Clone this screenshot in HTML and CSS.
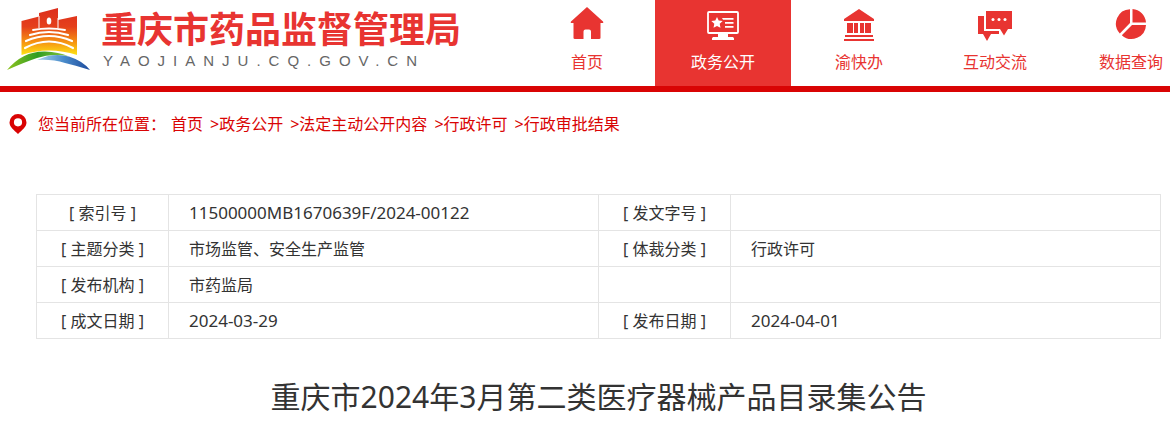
FILE: index.html
```html
<!DOCTYPE html>
<html lang="zh-CN">
<head>
<meta charset="utf-8">
<meta name="viewport" content="width=device-width, initial-scale=1">
<title>重庆市药品监督管理局</title>
<link rel="stylesheet" href="styles.css">
</head>
<body>
<header class="header">
  <a class="brand" href="#">
    <svg class="brand-mark" viewBox="0 0 84 64" aria-hidden="true">
      <defs>
        <linearGradient id="tower" x1="0" y1="0" x2="0" y2="1">
          <stop offset="0" stop-color="#dc2d1c"/>
          <stop offset=".4" stop-color="#e5401c"/>
          <stop offset=".75" stop-color="#f79a12"/>
          <stop offset="1" stop-color="#fde314"/>
        </linearGradient>
        <linearGradient id="hill">
          <stop offset="0" stop-color="#8fc31f"/>
          <stop offset=".5" stop-color="#2f9d22"/>
          <stop offset="1" stop-color="#8fc63c"/>
        </linearGradient>
        <linearGradient id="river">
          <stop offset="0" stop-color="#a9d4ec"/>
          <stop offset=".5" stop-color="#4a8ccb"/>
          <stop offset="1" stop-color="#1c4a9c"/>
        </linearGradient>
      </defs>
      <path fill="url(#tower)" d="M14.500 13L32 8.500V5L51 0V12L70 8V47Q42 38 14.500 47Z"/>
      <path fill="none" stroke="#fff" stroke-width="1" d="M32 8V20M51 10V20"/>
      <ellipse cx="42" cy="13" rx="2.300" ry="3.500" fill="#fff"/>
      <path fill="none" stroke="#fff" stroke-width="1.800" stroke-linecap="round" d="M26 22Q42 19 58 22"/>
      <path fill="none" stroke="#fff" stroke-width="2.200" stroke-linecap="round" d="M23 27Q42 21 61 27M19 33Q42 23 65 33M18 40Q42 27 66 40"/>
      <path fill="url(#hill)" d="M0 62Q16 43 38 43.500Q52 44 61 48Q44 45 30 50Q18 54 0 62Z"/>
      <path fill="url(#river)" d="M30 52Q46 44 62 48.500Q76 53 83 62Q67 57 58 55Q45 51 30 52Z"/>
    </svg>
    <span class="brand-text">
      <span class="brand-name">重庆市药品监督管理局</span>
      <span class="brand-domain">YAOJIANJU.CQ.GOV.CN</span>
    </span>
  </a>
  <nav class="nav">
    <a class="nav-item" href="#">
      <svg class="nav-icon" viewBox="0 0 34 34" aria-hidden="true"><path fill="currentColor" d="M17 0L33 14.500Q34 16 32 16H30.500V31Q30.500 32 29 32H21V24.500Q21 22.500 19 22.500H15.500Q13.500 22.500 13.500 24.500V32H5Q3.500 32 3.500 31V16H2Q0 16 1 14.500Z"/></svg>
      <span>首页</span>
    </a>
    <a class="nav-item nav-item-active" href="#" aria-current="page">
      <svg class="nav-icon" viewBox="0 0 34 34" aria-hidden="true"><rect x="2" y="5" width="30" height="21" rx="1" fill="none" stroke="currentColor" stroke-width="1.800"/><path fill="currentColor" d="M12 26h10v4h5q1.500 1 1 3H6q-.5-2 1-3h5zM11 10l1.700 3.600 4 .5-3 2.700.8 4L11 19l-3.500 1.800.8-4-3-2.700 4-.5zM16 11h11.500v1.800H17zM19 15h8.500v1.800H19zM19 19h8.500v1.800H19z"/></svg>
      <span>政务公开</span>
    </a>
    <a class="nav-item" href="#">
      <svg class="nav-icon" viewBox="0 0 34 34" aria-hidden="true"><path fill="currentColor" d="M17 2L32 12v2H2v-2zM5 16h6v10H5zM12 16h4v10h-4zM18 16h4v10h-4zM23 16h6v10h-6zM3 28h28v2H3zM2 32h30v2H2z"/></svg>
      <span>渝快办</span>
    </a>
    <a class="nav-item" href="#">
      <svg class="nav-icon" viewBox="0 0 34 34" aria-hidden="true"><path fill="currentColor" d="M0 9h6v15h15v3h-8l-4 7-4-7H0zM8 4h26v18h-4l-4 6.500-4-6.500H8z"/><g fill="#fff"><circle cx="15" cy="12.500" r="1.500"/><circle cx="21" cy="12.500" r="1.500"/><circle cx="27" cy="12.500" r="1.500"/></g></svg>
      <span>互动交流</span>
    </a>
    <a class="nav-item" href="#">
      <svg class="nav-icon" viewBox="0 0 34 34" aria-hidden="true"><path fill="currentColor" d="M18.500 2A14.500 14.500 0 0 1 32 15.500H18.500zM16 2.200V16L5.800 26.500A14.500 14.500 0 0 1 16 2.200zM18 18H32A14.500 14.500 0 0 1 7.800 28.200z"/></svg>
      <span>数据查询</span>
    </a>
  </nav>
</header>
<main class="main">
  <nav class="crumbs" aria-label="您当前所在位置">
    <svg class="pin" viewBox="0 0 18 20" aria-hidden="true"><path fill="currentColor" fill-rule="evenodd" d="M9 0a8.500 8.500 0 0 1 8.500 8.500C17.500 13 13 16 9 20 5 16 .5 13 .5 8.500A8.500 8.500 0 0 1 9 0zm0 4.200a4.100 4.100 0 1 0 0 8.200 4.100 4.100 0 0 0 0-8.200z"/></svg>
    <span class="crumbs-label">您当前所在位置：</span>
    <ol class="crumbs-list">
      <li><a href="#">首页</a></li>
      <li><a href="#">政务公开</a></li>
      <li><a href="#">法定主动公开内容</a></li>
      <li><a href="#">行政许可</a></li>
      <li><a href="#">行政审批结果</a></li>
    </ol>
  </nav>
  <article class="article">
    <table class="meta">
      <colgroup><col class="col-label"><col><col class="col-label"><col></colgroup>
      <tbody>
        <tr><th scope="row">[ 索引号 ]</th><td class="number">11500000MB1670639F/2024-00122</td><th scope="row">[ 发文字号 ]</th><td></td></tr>
        <tr><th scope="row">[ 主题分类 ]</th><td>市场监管、安全生产监管</td><th scope="row">[ 体裁分类 ]</th><td>行政许可</td></tr>
        <tr><th scope="row">[ 发布机构 ]</th><td>市药监局</td><td></td><td></td></tr>
        <tr><th scope="row">[ 成文日期 ]</th><td class="number">2024-03-29</td><th scope="row">[ 发布日期 ]</th><td class="number">2024-04-01</td></tr>
      </tbody>
    </table>
    <h1 class="title">重庆市2024年3月第二类医疗器械产品目录集公告</h1>
  </article>
</main>
</body>
</html>
```
FILE: styles.css
```css
* {
  box-sizing: border-box;
}

body {
  margin: 0;
  overflow-x: hidden;
  background: #fff;
  color: #333;
  font: 16px/24px "Noto Sans", "Noto Sans CJK SC", sans-serif;
}

a {
  color: inherit;
  text-decoration: none;
}

.header {
  display: flex;
  justify-content: space-between;
  border-bottom: 6px solid #d90404;
  color: #e83431;
}

.brand {
  display: flex;
  flex: none;
  align-items: flex-start;
  gap: 10px;
  padding: 8px 0 0 7px;
}

.brand-mark {
  width: 84px;
  height: 64px;
}

.brand-text {
  display: flex;
  flex-direction: column;
}

.brand-name {
  font-size: 36px;
  font-weight: 700;
  line-height: 44px;
}

.brand-domain {
  padding-left: 2px;
  color: #666;
  font: 15px/18px "Liberation Sans", Arial, sans-serif;
  letter-spacing: 8px;
}

.nav {
  display: flex;
  flex: none;
  margin-right: -29px;
}

.nav-item {
  display: flex;
  flex-direction: column;
  align-items: center;
  gap: 9px;
  width: 136px;
  padding: 7px 0 12px;
}

.nav-item-active {
  background: #e83431;
  color: #fff;
}

.nav-icon {
  width: 34px;
  height: 34px;
}

.main {
  padding: 20px 9px 0;
}

.crumbs {
  display: flex;
  align-items: center;
  color: #d90404;
}

.pin {
  width: 18px;
  height: 20px;
}

.crumbs-label {
  margin: 0 5px 0 11px;
}

.crumbs-list {
  display: flex;
  margin: 0;
  padding: 0;
  list-style: none;
}

.crumbs-list li + li::before {
  content: ">";
  margin-left: 7px;
}

.article {
  padding: 58px 0 0 27px;
}

.meta {
  width: 100%;
  border-collapse: collapse;
  table-layout: fixed;
}

.col-label {
  width: 132px;
}

.meta th,
.meta td {
  height: 36px;
  padding: 4px 20px;
  border: 1px solid #e4e4e4;
  font-weight: 400;
  text-align: left;
}

.meta th {
  padding: 4px 0;
  text-align: center;
}

.meta .number {
  font-size: 17px;
}

.title {
  margin: 36px 0 0;
  font-size: 30px;
  font-weight: 400;
  line-height: 44px;
  text-align: center;
}
```
